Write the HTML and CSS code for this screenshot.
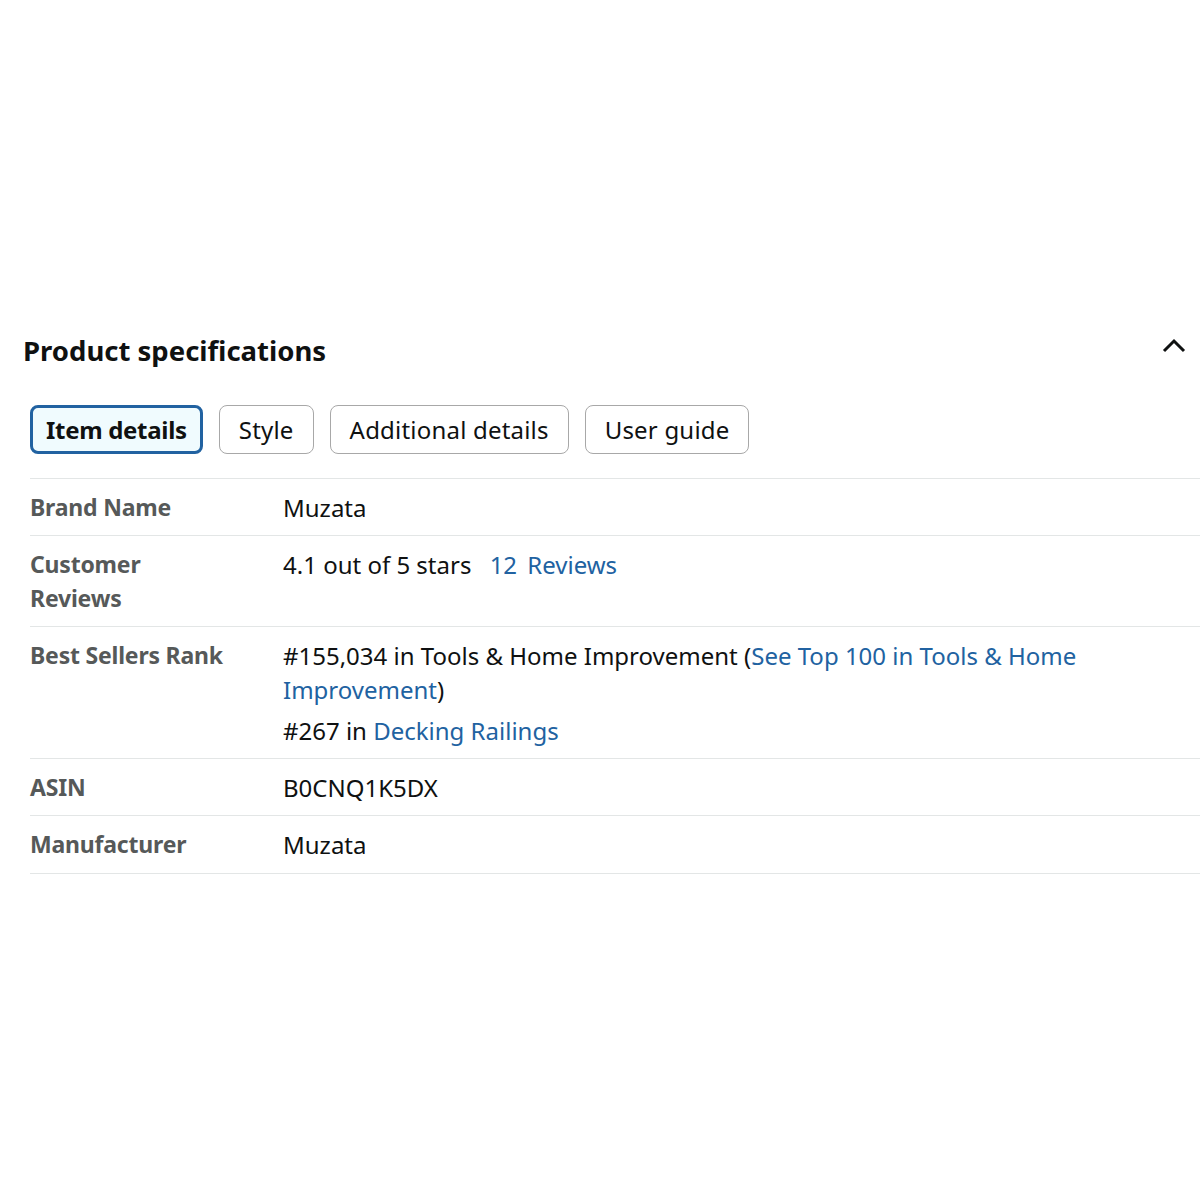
FILE: index.html
```html
<!DOCTYPE html>
<html>

<head>
    <meta charset="utf-8">
    <title>Product specifications</title>
    <link rel="stylesheet" href="styles.css">
</head>

<body>

    <div class="specs">

        <div class="specs-head">
            <h2>Product specifications</h2>
            <svg class="chevron" width="24" height="16" viewBox="0 0 24 16">
                <path d="M2 13 L12 3 L22 13" fill="none" stroke="#0f1111" stroke-width="3" />
            </svg>
        </div>

        <div class="tabs">
            <button class="tab active">Item details</button>
            <button class="tab">Style</button>
            <button class="tab">Additional details</button>
            <button class="tab">User guide</button>
        </div>

        <table class="spec-table">
            <tr>
                <th>Brand Name</th>
                <td>Muzata</td>
            </tr>
            <tr>
                <th>Customer Reviews</th>
                <td>4.1 out of 5 stars <a href="#" class="reviews">12 Reviews</a></td>
            </tr>
            <tr>
                <th>Best Sellers Rank</th>
                <td>
                    <p>#155,034 in Tools &amp; Home Improvement (<a href="#">See Top 100 in Tools &amp; Home Improvement</a>)</p>
                    <p class="sub">#267 in <a href="#">Decking Railings</a></p>
                </td>
            </tr>
            <tr>
                <th>ASIN</th>
                <td>B0CNQ1K5DX</td>
            </tr>
            <tr>
                <th>Manufacturer</th>
                <td>Muzata</td>
            </tr>
        </table>

    </div>

</body>

</html>
```

FILE: styles.css
```css
body {
    margin: 0;
    background: #fff;
    color: #0f1111;
    font-family: "Noto Sans", "Open Sans", sans-serif;
}

p {
    margin: 0;
}

a {
    color: #2162a1;
    text-decoration: none;
}

.specs {
    padding: 328px 0 0 23px;
}

.specs-head {
    display: flex;
    justify-content: space-between;
    align-items: center;
    padding-right: 14px;
}

.specs-head h2 {
    margin: 0;
    font-size: 27.5px;
    font-weight: 700;
    line-height: 46px;
}

.chevron {
    margin-top: -10px;
}

.tabs {
    display: flex;
    gap: 16px;
    padding: 31px 0 24px 7px;
}

.tab {
    height: 49px;
    padding: 0 19px;
    border: 1px solid #a8a8a8;
    border-radius: 8px;
    background: #fff;
    color: #0f1111;
    font-family: inherit;
    font-size: 24px;
    letter-spacing: 0.2px;
}

.tab.active {
    border: 3px solid #2162a1;
    background: #f0fbfe;
    padding: 0 13px;
    font-weight: 700;
    letter-spacing: -0.3px;
}

.spec-table {
    margin-left: 7px;
    width: calc(100% - 7px);
    border-collapse: collapse;
    font-size: 24px;
    line-height: 33.4px;
}

.spec-table tr {
    border-top: 1px solid #e3e6e6;
    border-bottom: 1px solid #e3e6e6;
}

.spec-table th {
    width: 253px;
    padding: 12px 50px 11px 0;
    box-sizing: border-box;
    text-align: left;
    vertical-align: top;
    color: #565959;
    font-weight: 700;
    font-size: 23px;
    letter-spacing: -0.2px;
}

.spec-table td {
    padding: 12px 0 11px;
    vertical-align: top;
}

.reviews {
    margin-left: 12px;
    word-spacing: 4px;
}

.spec-table .sub {
    margin-top: 7.5px;
}
```
